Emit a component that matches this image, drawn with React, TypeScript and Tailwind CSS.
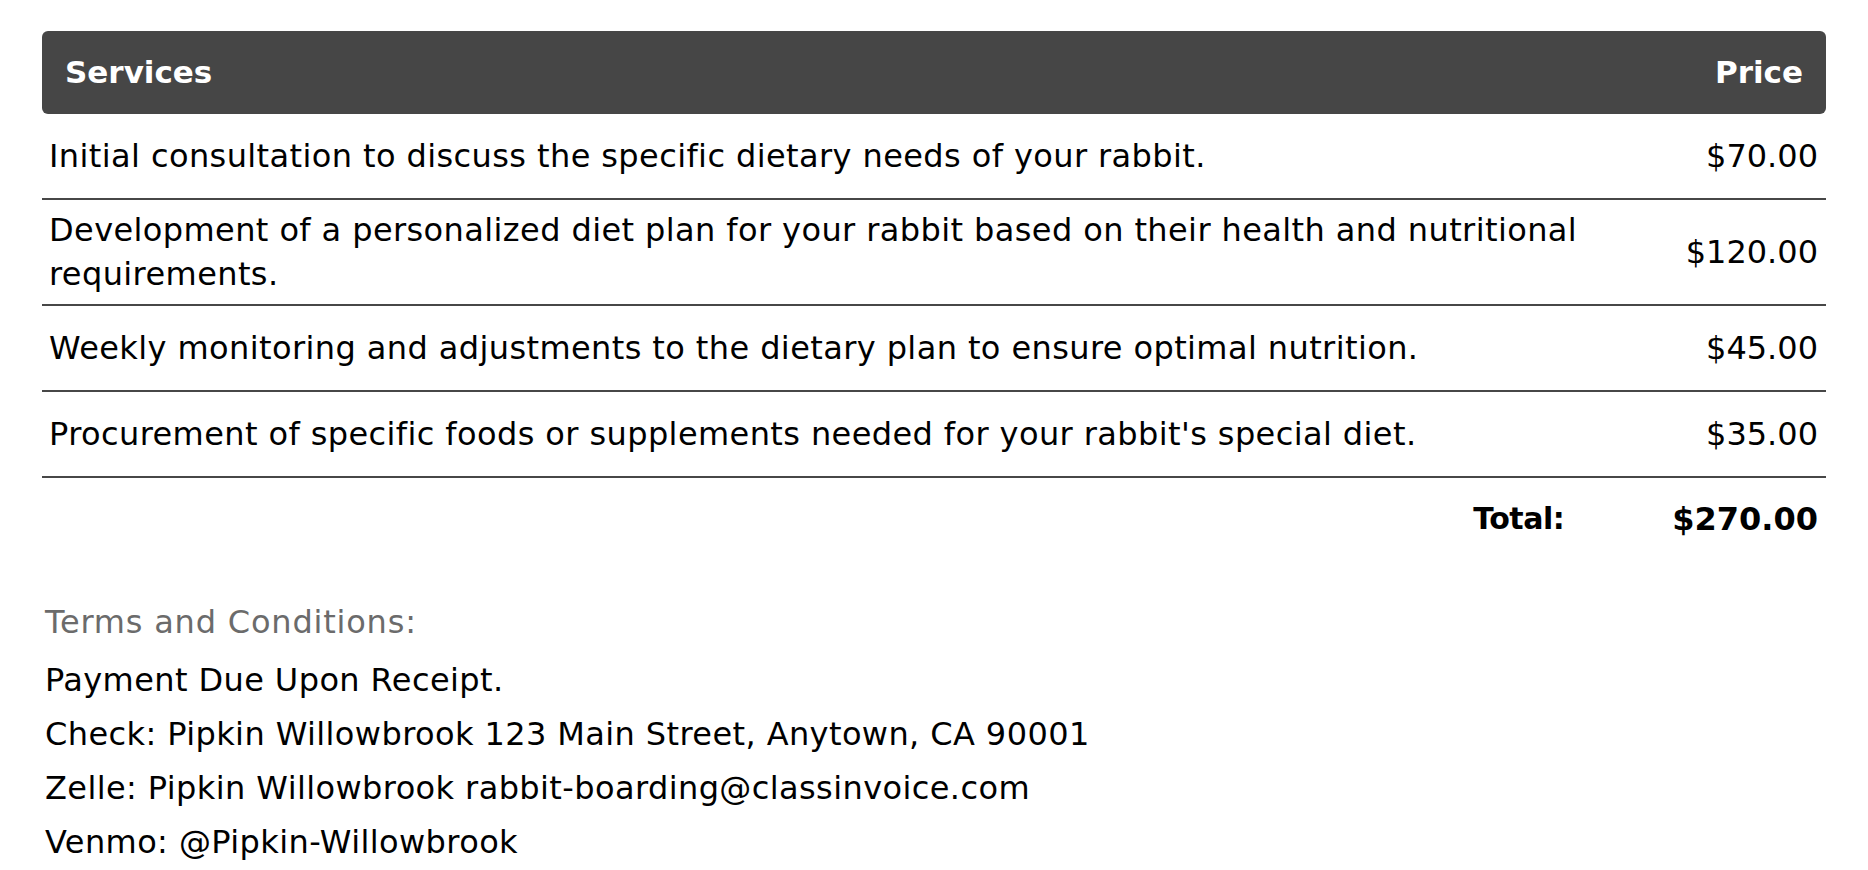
import React from 'react';

interface Service {
  description: string;
  price: string;
}

const services: Service[] = [
  {
    description: 'Initial consultation to discuss the specific dietary needs of your rabbit.',
    price: '$70.00',
  },
  {
    description:
      'Development of a personalized diet plan for your rabbit based on their health and nutritional requirements.',
    price: '$120.00',
  },
  {
    description: 'Weekly monitoring and adjustments to the dietary plan to ensure optimal nutrition.',
    price: '$45.00',
  },
  {
    description: "Procurement of specific foods or supplements needed for your rabbit's special diet.",
    price: '$35.00',
  },
];

const terms = [
  'Payment Due Upon Receipt.',
  'Check: Pipkin Willowbrook 123 Main Street, Anytown, CA 90001',
  'Zelle: Pipkin Willowbrook rabbit-boarding@classinvoice.com',
  'Venmo: @Pipkin-Willowbrook',
];

const App: React.FC = () => {
  return (
    <div className="min-h-screen bg-white px-[42px] pt-[31px] text-black font-['DejaVu_Sans',sans-serif]">
      {/* Services table */}
      <div className="flex h-[83px] items-center justify-between rounded-md bg-[#464646] px-[23px] text-[31px] font-bold text-white">
        <span>Services</span>
        <span>Price</span>
      </div>

      {services.map((s) => (
        <div
          key={s.price}
          className="flex min-h-[86px] items-center justify-between gap-10 border-b-2 border-[#474747] py-[8px] pl-[7px] pr-[8px] text-[32px] leading-[44px] tracking-[0.4px]"
        >
          <span className="flex-1">{s.description}</span>
          <span className="w-[190px] shrink-0 text-right tracking-normal">{s.price}</span>
        </div>
      ))}

      {/* Total */}
      <div className="flex justify-end gap-[108px] pr-[8px] pt-[19px] text-[32px] font-bold leading-[44px]">
        <span className="text-[30px] tracking-[-0.5px]">Total:</span>
        <span>$270.00</span>
      </div>

      {/* Terms */}
      <div className="mt-[54px] pl-[3px] text-[32px] leading-[54px] tracking-[0.4px]">
        <div className="mb-[4px] text-[#6b6b6b] tracking-[0.8px]">Terms and Conditions:</div>
        {terms.map((t) => (
          <div key={t}>{t}</div>
        ))}
      </div>
    </div>
  );
};

export default App;
